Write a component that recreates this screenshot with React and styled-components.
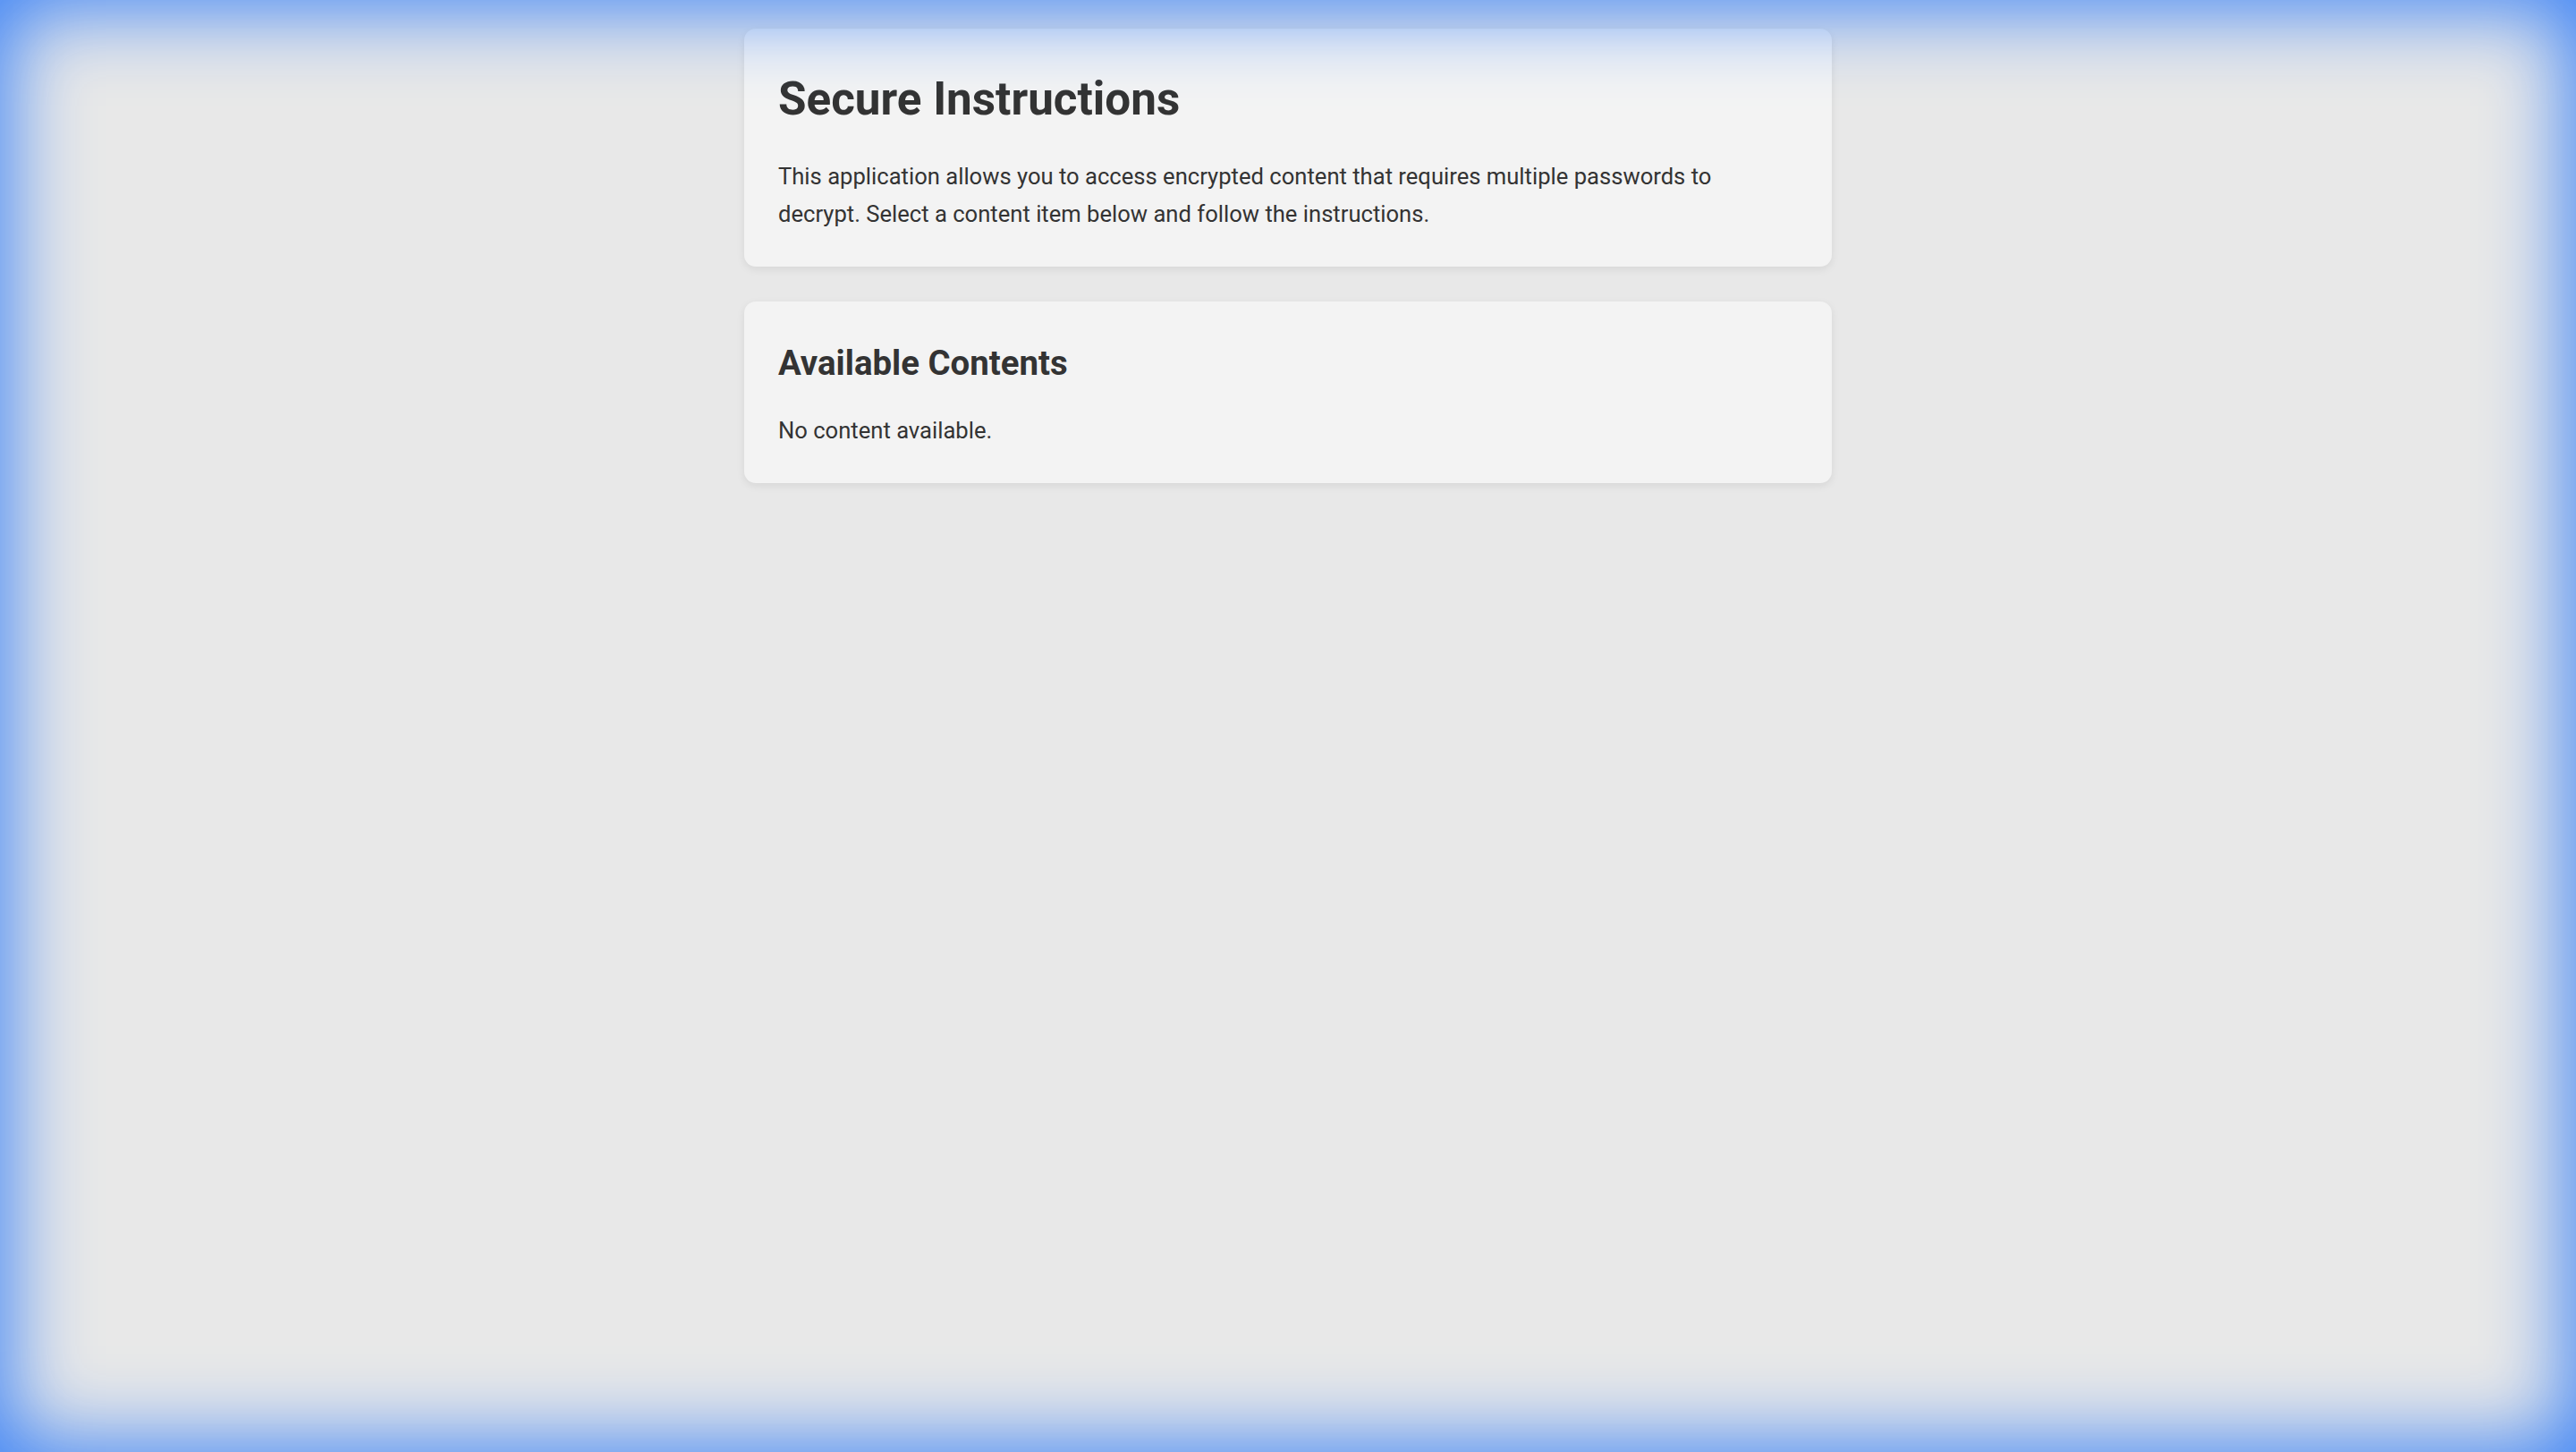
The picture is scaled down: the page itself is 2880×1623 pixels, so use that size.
import React from 'react';
import styled, { createGlobalStyle } from 'styled-components';

const GlobalStyle = createGlobalStyle`
  html, body {
    margin: 0;
    padding: 0;
  }

  body {
    min-height: 100vh;
    background-color: #e8e8e8;
    color: #333;
    font-family: Roboto, "Noto Sans", "Liberation Sans", sans-serif;
    line-height: 1.6;
  }
`;

// blue glow round the window edge, drawn over everything
const EdgeGlow = styled.div`
  position: fixed;
  inset: 0;
  pointer-events: none;
  z-index: 10;
  box-shadow: inset 0 0 90px 10px rgba(59, 130, 246, 1);
`;

const Container = styled.main`
  width: 1216px;
  margin: 32px auto 0;
  display: flex;
  flex-direction: column;
  gap: 39px;
`;

const Card = styled.section`
  background-color: #f3f3f3;
  border-radius: 13px;
  padding: 38px;
  box-shadow: 0 3px 10px rgba(0, 0, 0, 0.08);
`;

const Title = styled.h1`
  font-size: 51.2px;
  font-weight: 700;
  line-height: 1.6;
  margin: 0 0 24px;
`;

const SectionTitle = styled.h2`
  font-size: 38.4px;
  font-weight: 700;
  line-height: 1.6;
  margin: 0 0 24px;
`;

const Text = styled.p`
  font-size: 25.6px;
  line-height: 42px;
  margin: 0;
`;

const contents = [];

const App = () => {
  return (
    <>
      <GlobalStyle />
      <Container>
        <Card>
          <Title>Secure Instructions</Title>
          <Text>
            This application allows you to access encrypted content that requires multiple passwords to
            decrypt. Select a content item below and follow the instructions.
          </Text>
        </Card>
        <Card>
          <SectionTitle>Available Contents</SectionTitle>
          {contents.length === 0 && <Text>No content available.</Text>}
        </Card>
      </Container>
      <EdgeGlow />
    </>
  );
};

export default App;
